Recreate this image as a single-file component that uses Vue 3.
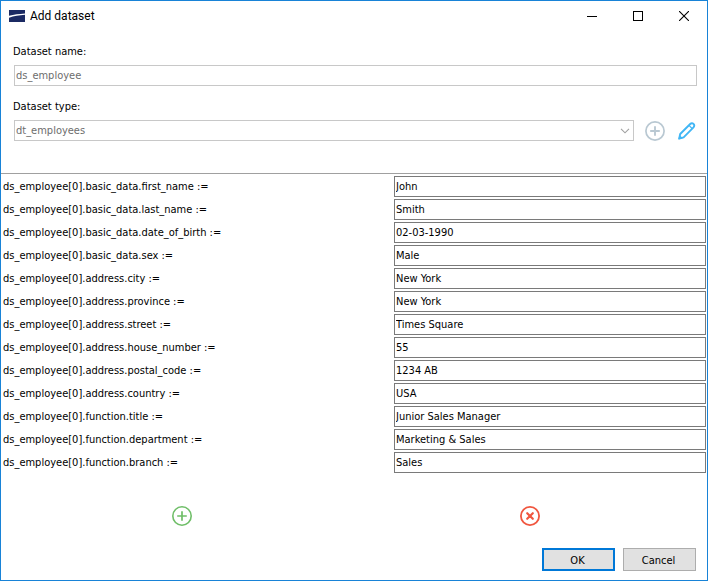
<script setup>
import { ref } from 'vue'

const datasetName = ref('ds_employee')
const datasetType = ref('dt_employees')

const fields = ref([
  { path: 'basic_data.first_name', value: 'John' },
  { path: 'basic_data.last_name', value: 'Smith' },
  { path: 'basic_data.date_of_birth', value: '02-03-1990' },
  { path: 'basic_data.sex', value: 'Male' },
  { path: 'address.city', value: 'New York' },
  { path: 'address.province', value: 'New York' },
  { path: 'address.street', value: 'Times Square' },
  { path: 'address.house_number', value: '55' },
  { path: 'address.postal_code', value: '1234 AB' },
  { path: 'address.country', value: 'USA' },
  { path: 'function.title', value: 'Junior Sales Manager' },
  { path: 'function.department', value: 'Marketing & Sales' },
  { path: 'function.branch', value: 'Sales' },
])
</script>

<template>
  <main class="dialog">
    <header class="titlebar">
      <svg class="logo" width="16" height="12" viewBox="0 0 16 12" aria-hidden="true">
        <rect width="16" height="12" fill="#1b2a63" />
        <path d="M0 5.800C5 4.300 10 4 16 3.400V4.800C10 5.400 5 6 0 7.800z" fill="#fff" />
      </svg>
      <h1 class="title">Add dataset</h1>
      <button class="caption" type="button" aria-label="Minimize">
        <svg width="10" height="10" viewBox="0 0 10 10"><path d="M0 5.5H10" stroke="#000" /></svg>
      </button>
      <button class="caption" type="button" aria-label="Maximize">
        <svg width="10" height="10" viewBox="0 0 10 10"><rect x=".5" y=".5" width="9" height="9" fill="none" stroke="#000" /></svg>
      </button>
      <button class="caption" type="button" aria-label="Close">
        <svg width="10" height="10" viewBox="0 0 10 10"><path d="M0 0L10 10M10 0L0 10" stroke="#000" stroke-width="1.1" /></svg>
      </button>
    </header>

    <section class="settings">
      <label class="label" for="ds-name">Dataset name:</label>
      <input id="ds-name" v-model="datasetName" class="box muted" type="text" disabled />
      <label class="label" for="ds-type">Dataset type:</label>
      <div class="type-row">
        <div class="select-wrap">
          <select id="ds-type" v-model="datasetType" class="box muted" disabled>
            <option>dt_employees</option>
          </select>
          <svg class="chevron" width="10" height="6" viewBox="0 0 10 6" aria-hidden="true">
            <path d="M1 .8L5 4.8L9 .8" fill="none" stroke="#a0a0a0" stroke-width="1.1" />
          </svg>
        </div>
        <button class="icon" type="button" aria-label="Add type" disabled>
          <svg width="20" height="20" viewBox="0 0 20 20" fill="none" stroke="#b9c8d2">
            <circle cx="10" cy="10" r="9.1" stroke-width="1.7" />
            <path d="M10 5.2V14.8M5.2 10H14.8" stroke-width="1.9" />
          </svg>
        </button>
        <button class="icon" type="button" aria-label="Edit type">
          <svg width="20" height="20" viewBox="0 0 20 20" fill="none" stroke="#41b6f5" stroke-width="1.9" stroke-linejoin="round">
            <path d="M3.200 17.500L4.200 13L14.200 3C15.300 1.900 16.600 2 17.500 2.900C18.500 3.900 18.600 5.200 17.500 6.300L7.600 16.300Z" />
            <path d="M13 4.400L16.200 7.600" stroke-width="1.300" />
            <path d="M2.200 18.500L3.600 14L6.800 17.200Z" fill="#41b6f5" stroke="none" />
          </svg>
        </button>
      </div>
    </section>

    <section class="fields">
      <div v-for="(field, i) in fields" :key="field.path" class="field">
        <label :for="'field-' + i">ds_employee[0].{{ field.path }} :=</label>
        <input :id="'field-' + i" v-model="field.value" class="box" type="text" />
      </div>
    </section>

    <div class="actions">
      <button class="icon" type="button" aria-label="Add element">
        <svg width="20" height="20" viewBox="0 0 20 20" fill="none" stroke="#6fbe68">
          <circle cx="10" cy="10" r="9.200" stroke-width="1.600" />
          <path d="M10 5.200V14.800M5.200 10H14.800" stroke-width="1.700" />
        </svg>
      </button>
      <button class="icon" type="button" aria-label="Remove element">
        <svg width="20" height="20" viewBox="0 0 20 20" fill="none" stroke="#f0563f">
          <circle cx="10" cy="10" r="9.100" stroke-width="1.800" />
          <path d="M7.200 7.200L12.800 12.800M12.800 7.200L7.200 12.800" stroke-width="2.200" stroke-linecap="round" />
        </svg>
      </button>
    </div>

    <footer class="footer">
      <button class="push primary" type="button">OK</button>
      <button class="push" type="button">Cancel</button>
    </footer>
  </main>
</template>

<style>
body {
  margin: 0;
  background: #fff;
}
</style>

<style scoped>
.dialog {
  box-sizing: border-box;
  min-height: 100vh;
  display: flex;
  flex-direction: column;
  border: 1px solid #1883d7;
  background: #fff;
  color: #000;
  font-family: "DejaVu Sans Condensed", "Noto Sans", sans-serif;
  font-size: 11px;
  line-height: 15px;
}
button,
input,
select {
  box-sizing: border-box;
  margin: 0;
  font: inherit;
  color: inherit;
}
svg {
  display: block;
}
.titlebar {
  display: flex;
  align-items: center;
  height: 29px;
  padding-left: 8px;
}
.title {
  flex: 1;
  margin: 0 0 0 5px;
  padding-top: 2px;
  font-family: Roboto, sans-serif;
  font-size: 12px;
  font-weight: 400;
}
.caption {
  display: grid;
  place-items: center;
  width: 46px;
  height: 29px;
  padding: 0;
  border: 0;
  background: none;
}
.settings {
  display: flex;
  flex-direction: column;
  padding: 14px 10px 32px 13px;
  border-bottom: 1px solid #a0a0a0;
}
.label {
  margin-bottom: 6px;
  margin-left: -1px;
}
.box {
  width: 100%;
  height: 21px;
  padding: 0 1px;
  border: 1px solid #7a7a7a;
  border-radius: 0;
  background: #fff;
  outline: 0;
}
.muted {
  border-color: #c8c8c8;
  color: #6d6d6d;
  opacity: 1;
}
.settings > .box {
  margin-bottom: 13px;
}
.type-row {
  display: flex;
  align-items: center;
  gap: 11px;
  padding-right: 1px;
}
.select-wrap {
  position: relative;
  flex: 1;
}
.select-wrap select {
  display: block;
  appearance: none;
}
.chevron {
  position: absolute;
  top: 8px;
  right: 4px;
}
.icon {
  padding: 0;
  border: 0;
  background: none;
}
.fields {
  display: grid;
  gap: 2px;
  padding: 2px 1px 0 3px;
}
.field {
  display: grid;
  grid-template-columns: 5fr 4fr;
  line-height: 21px;
}
.field label {
  margin-left: -1px;
}
.actions {
  display: flex;
  justify-content: space-around;
  padding: 33px 3px 0 7px;
}
.footer {
  display: flex;
  justify-content: flex-end;
  gap: 8px;
  margin-top: auto;
  padding: 20px 11px 9px;
}
.push {
  width: 73px;
  height: 23px;
  padding: 1px 2px 0 0;
  border: 1px solid #adadad;
  background: #e1e1e1;
}
.primary {
  border: 2px solid #0078d7;
}
</style>
